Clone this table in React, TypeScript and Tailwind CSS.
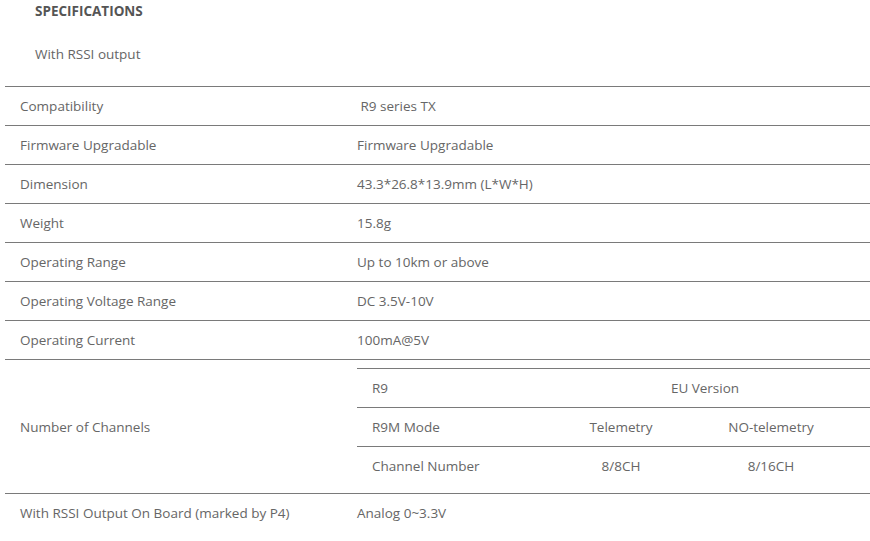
const rows: { label: string; value: string }[] = [
  { label: 'Compatibility', value: '\u00a0R9 series TX' },
  { label: 'Firmware Upgradable', value: 'Firmware Upgradable' },
  { label: 'Dimension', value: '43.3*26.8*13.9mm (L*W*H)' },
  { label: 'Weight', value: '15.8g' },
  { label: 'Operating Range', value: 'Up to 10km or above' },
  { label: 'Operating Voltage Range', value: 'DC 3.5V-10V' },
  { label: 'Operating Current', value: '100mA@5V' },
];

function ChannelsTable() {
  return (
    <div className="w-full">
      <div className="grid h-[39px] grid-cols-[198px_132px_168px_1fr] items-center border-t border-[#7a7a7a] pt-[1px]">
        <div className="pl-[15px]">R9</div>
        <div className="col-span-2 text-center">EU Version</div>
        <div />
      </div>
      <div className="grid h-[39px] grid-cols-[198px_132px_168px_1fr] items-center border-t border-[#7a7a7a] pt-[1px]">
        <div className="pl-[15px]">R9M Mode</div>
        <div className="text-center">Telemetry</div>
        <div className="text-center">NO-telemetry</div>
        <div />
      </div>
      <div className="grid h-[39px] grid-cols-[198px_132px_168px_1fr] items-center border-t border-[#7a7a7a] pt-[1px]">
        <div className="pl-[15px]">Channel Number</div>
        <div className="text-center">8/8CH</div>
        <div className="text-center">8/16CH</div>
        <div />
      </div>
    </div>
  );
}

export default function App() {
  return (
    <div className="h-[541px] w-[870px] overflow-hidden bg-white text-[13.5px] text-[#666] font-['Open_Sans',sans-serif]">
      <div className="flex h-[22px] items-center pl-[35px] pt-[1px] font-bold text-[#555]">SPECIFICATIONS</div>
      <div className="flex h-[64px] items-center pl-[35px]">With RSSI output</div>

      <div className="ml-[5px] w-[865px]">
        {rows.map(({ label, value }) => (
          <div key={label} className="flex h-[39px] items-center border-t border-[#7a7a7a] pt-[1px]">
            <div className="w-[337px] pl-[15px]">{label}</div>
            <div className="pl-[15px]">{value}</div>
          </div>
        ))}

        <div className="flex h-[134px] border-t border-[#7a7a7a]">
          <div className="flex w-[337px] items-center pl-[15px] pt-[1px]">Number of Channels</div>
          <div className="flex-1 pt-[8px] pl-[15px]">
            <ChannelsTable />
          </div>
        </div>

        <div className="flex h-[39px] items-center border-t border-[#7a7a7a] pt-[1px]">
          <div className="w-[337px] pl-[15px]">With RSSI Output On Board (marked by P4)</div>
          <div className="pl-[15px]">Analog 0~3.3V</div>
        </div>
      </div>
    </div>
  );
}
